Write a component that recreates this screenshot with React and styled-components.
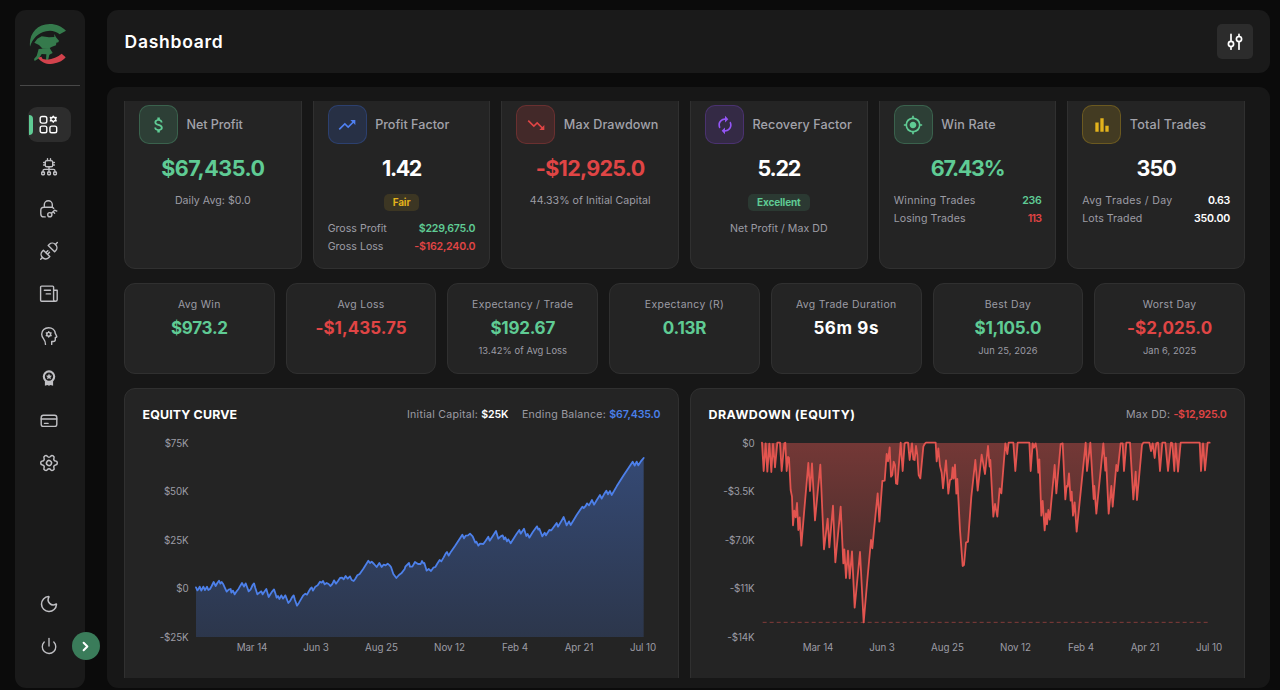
import React from "react";
import styled, { createGlobalStyle } from "styled-components";
import { Moon, Power, ChevronRight, Settings } from "lucide-react";
import {
  MdAttachMoney,
  MdTrendingUp,
  MdTrendingDown,
  MdAutorenew,
  MdMyLocation,
  MdBarChart,
} from "react-icons/md";

const GREEN = "#5fcb94";
const RED = "#e04545";
const BLUE = "#4a7fe8";
const YELLOW = "227, 179, 28";
const MINT = "95, 203, 148";

const stats = [
  {
    title: "Net Profit",
    icon: <MdAttachMoney />,
    tint: MINT,
    track: -0.1,
    value: "$67,435.0",
    valueTrack: -0.5,
    color: GREEN,
    note: "Daily Avg: $0.0",
  },
  {
    title: "Profit Factor",
    icon: <MdTrendingUp />,
    tint: "59, 110, 235",
    iconColor: "#4f80f2",
    value: "1.42",
    valueTrack: -1.4,
    badge: "Fair",
    badgeTint: YELLOW,
    rows: [
      ["Gross Profit", "$229,675.0", GREEN, -0.24],
      ["Gross Loss", "-$162,240.0", RED, -0.2],
    ],
  },
  {
    title: "Max Drawdown",
    icon: <MdTrendingDown />,
    tint: "224, 69, 69",
    track: 0.1,
    value: "-$12,925.0",
    valueTrack: -0.7,
    color: RED,
    note: "44.33% of Initial Capital",
  },
  {
    title: "Recovery Factor",
    icon: <MdAutorenew />,
    tint: "139, 76, 240",
    iconColor: "#9355f5",
    track: 0.08,
    value: "5.22",
    valueTrack: -1.25,
    badge: "Excellent",
    badgeTint: MINT,
    note: "Net Profit / Max DD",
  },
  {
    title: "Win Rate",
    icon: <MdMyLocation />,
    tint: MINT,
    track: 0.15,
    value: "67.43%",
    valueTrack: -1.3,
    color: GREEN,
    rows: [
      ["Winning Trades", "236", GREEN, -0.35, 0.27],
      ["Losing Trades", "113", RED, -0.7, 0.1],
    ],
  },
  {
    title: "Total Trades",
    icon: <MdBarChart />,
    tint: YELLOW,
    track: 0.18,
    value: "350",
    valueTrack: -1,
    rows: [
      ["Avg Trades / Day", "0.63", "#fff", -0.3, 0.3],
      ["Lots Traded", "350.00", "#fff", -0.2, 0.04],
    ],
  },
];

const metrics = [
  { label: "Avg Win", value: "$973.2", color: GREEN, track: -0.3 },
  { label: "Avg Loss", value: "-$1,435.75", color: RED, track: 0.05 },
  { label: "Expectancy / Trade", value: "$192.67", color: GREEN, track: -0.25, note: "13.42% of Avg Loss" },
  { label: "Expectancy (R)", value: "0.13R", color: GREEN, track: -0.2 },
  { label: "Avg Trade Duration", value: "56m 9s", track: 0.6 },
  { label: "Best Day", value: "$1,105.0", color: GREEN, track: -0.2, note: "Jun 25, 2026" },
  { label: "Worst Day", value: "-$2,025.0", color: RED, track: 0.1, note: "Jan 6, 2025" },
];

const dates = [
  ["Mar 14", 56.5],
  ["Jun 3", 120.5],
  ["Aug 25", 186],
  ["Nov 12", 254],
  ["Feb 4", 319.5],
  ["Apr 21", 383.5],
  ["Jul 10", 447.5],
];

// chart series, in thirds of a pixel from the plot's top left corner
const equity =
  "0,433 4,442 7,439 11,431 16,443 22,431 27,441 33,431 37,441 42,438 47,429 53,417 59,429 64,420 69,413 73,422 77,417 82,424 86,433 92,446 98,440 104,438 106,449 111,443 116,454 122,445 128,437 133,428 138,420 144,431 149,421 152,429 158,445 164,439 170,426 174,421 178,435 184,454 190,449 196,445 200,454 206,445 211,438 218,462 224,452 229,445 234,439 238,451 242,464 246,459 250,468 256,457 261,467 268,457 277,480 283,473 288,463 293,457 297,471 303,488 309,479 316,467 322,457 328,452 333,455 339,444 344,436 347,433 351,443 358,431 365,427 372,416 377,419 381,414 386,424 392,420 398,423 403,429 409,423 414,412 420,422 426,414 432,405 438,404 443,409 449,399 455,407 462,400 467,411 473,414 478,407 484,397 491,393 502,377 517,353 522,360 527,356 534,363 542,372 550,360 557,372 563,365 569,367 575,362 581,367 585,372 592,393 601,405 609,396 616,391 626,378 628,371 639,360 642,371 649,371 657,357 666,363 674,363 678,354 682,361 685,360 692,383 698,378 705,384 712,374 718,372 725,360 731,351 736,355 743,343 749,332 753,327 758,338 765,326 777,309 799,275 804,286 809,278 816,277 822,272 830,280 838,299 841,296 847,308 852,302 862,303 869,293 877,281 881,293 889,281 900,264 907,287 914,280 920,277 924,289 928,283 933,295 937,289 944,301 952,288 962,272 970,261 974,272 984,257 991,279 995,273 1000,284 1010,268 1023,250 1027,260 1030,257 1039,280 1046,269 1050,277 1060,261 1066,262 1082,240 1086,251 1094,238 1103,222 1112,247 1119,235 1124,246 1142,216 1159,191 1163,195 1169,189 1173,181 1179,187 1188,171 1194,185 1202,172 1212,156 1217,167 1224,154 1231,143 1236,154 1242,144 1247,156 1262,130 1282,98 1310,56 1316,68 1322,56 1327,67 1334,56 1343,45";

const drawdown =
  "0,-1 5,84 11,1 16,86 22,2 28,87 33,3 39,73 46,-1 54,-1 59,84 67,1 70,-1 74,84 78,42 81,45 86,141 90,161 93,247 97,203 101,223 105,180 109,261 113,223 118,308 126,211 139,60 144,144 150,61 159,232 175,65 186,319 197,227 202,313 213,188 220,358 236,191 244,361 247,319 252,405 258,323 263,406 270,325 278,494 294,327 305,538 316,411 327,291 331,316 336,261 347,151 352,236 361,114 368,113 374,33 378,55 383,13 387,101 391,96 395,56 399,66 402,121 406,123 416,-1 422,84 428,1 432,-1 438,-1 443,51 450,1 454,49 458,51 462,9 466,36 470,96 475,106 484,11 488,3 492,-1 521,-1 524,55 529,16 534,69 539,89 543,136 552,52 559,152 564,111 569,108 572,73 575,107 579,65 583,152 586,108 594,261 602,369 606,366 612,299 618,296 628,161 640,51 647,143 659,35 669,93 678,9 683,71 685,51 694,221 699,183 706,221 713,136 718,151 730,1 736,33 740,-1 754,-1 760,84 767,-1 802,-1 806,84 812,1 816,14 821,1 825,26 829,89 832,49 838,218 842,174 848,262 852,211 855,244 859,201 863,230 878,66 883,151 896,3 902,1 910,169 914,129 917,131 921,91 926,173 929,146 933,218 938,178 944,266 971,-1 975,84 985,-1 995,168 997,129 1003,212 1024,1 1030,83 1032,44 1040,212 1048,129 1052,191 1063,66 1067,84 1076,1 1082,1 1086,84 1093,-1 1104,-1 1114,169 1121,86 1125,171 1140,6 1144,-1 1162,-1 1167,24 1172,1 1178,45 1183,1 1188,-1 1194,84 1201,-1 1210,-1 1218,84 1227,-1 1231,1 1237,84 1241,1 1248,86 1256,-1 1313,-1 1317,84 1323,1 1329,82 1337,-1 1343,-1";

function Chart({ id, points, color, base, bottom, limit }) {
  return (
    <Plot viewBox="0 0 1344 582">
      <defs>
        <linearGradient id={id} gradientUnits="userSpaceOnUse" x1="0" x2="0" y1="0" y2="582">
          <stop offset="0" stopColor={color} stopOpacity={0.42} />
          <stop offset="1" stopColor={color} stopOpacity={bottom} />
        </linearGradient>
      </defs>
      <path d={`M0,${base} L${points} L1343,${base} Z`} fill={`url(#${id})`} />
      {limit && (
        <path d={`M2,${limit} H1343`} stroke={color} strokeWidth="3" strokeDasharray="12 9" opacity="0.5" />
      )}
      <polyline
        points={points}
        fill="none"
        stroke={color}
        strokeWidth="5.4"
        strokeLinejoin="round"
        strokeLinecap="round"
      />
    </Plot>
  );
}

function ChartCard({ title, track, legend, ticks, children }) {
  return (
    <Panel>
      <PanelHead>
        <PanelTitle $track={track}>{title}</PanelTitle>
        <Legend>{legend}</Legend>
      </PanelHead>
      <PlotRow>
        <YAxis>
          {ticks.map((t) => (
            <span key={t}>{t}</span>
          ))}
        </YAxis>
        {children}
      </PlotRow>
      <XAxis>
        {dates.map(([d, x]) => (
          <Tick key={d} style={{ left: x }}>
            {d}
          </Tick>
        ))}
      </XAxis>
    </Panel>
  );
}

const Logo = () => (
  <svg width="38" height="42" viewBox="88 68 114 126">
    <g fill="#357a4c">
      <path d="M91 139C87 101 112 71 150 71c20 0 37 8 49 20l-19 11c-12-10-27-13-41-9-24 5-40 22-48 46z" />
      <path d="M104 127l9-12 13-7 22 3 16-1 0-9 5 10 9 10-2 5-6 1-1 8-12 4-11 6-17 0-11-11z" />
      <path d="M117 146l33-3 9 15-10 5-4 18-6-3 1-16-14-1-8 13-13 8-2-6 8-9z" />
    </g>
    <path d="M115 172l10-3 4 7 14 2c15-2 32-8 43-18l12 11c-10 13-28 19-45 20-15 0-30-7-38-19z" fill="#d2424c" />
  </svg>
);

const DashboardIcon = () => (
  <svg width="20" height="20" viewBox="0 0 20 20">
    <rect x="1.2" y="1.5" width="6.6" height="6.6" rx="1.8" />
    <rect x="1.2" y="11.1" width="6.6" height="6.6" rx="1.8" />
    <rect x="10.9" y="11.1" width="6.8" height="6.6" rx="1.8" />
    <path d="M14.3 1.3l1.1 1.4 1.8-.2-.7 1.7.7 1.7-1.8-.2-1.1 1.5-1.1-1.5-1.8.2.7-1.7-.7-1.7 1.8.2z" />
  </svg>
);

const NetworkIcon = () => (
  <svg width="20" height="20" viewBox="0 0 20 20">
    <rect x="6.3" y="3.6" width="7.4" height="6.2" rx="1.6" />
    <path d="M8.5 3.5V1.7M11.5 3.5V1.7M6.2 5.5H4.6M6.2 8H4.6M15.4 5.5h-1.6M15.4 8h-1.6M10 10v5M4 15v-1c0-1 .6-1.6 1.6-1.6h8.8c1 0 1.6.6 1.6 1.6v1" />
    <rect x="2.7" y="15" width="2.7" height="2.7" rx=".6" />
    <rect x="8.7" y="15" width="2.7" height="2.7" rx=".6" />
    <rect x="14.7" y="15" width="2.7" height="2.7" rx=".6" />
  </svg>
);

const LockKeyIcon = () => (
  <svg width="20" height="20" viewBox="0 0 20 20">
    <path d="M5.3 8.2V5.8a4 4 0 0 1 8 0v2.4M14.7 9.4c-.4-.8-1-1.2-1.9-1.2H4.9C3 8.2 1.8 9.5 1.8 11.500v3.4c0 2 1.2 3 3.1 3h1.3" />
    <circle cx="10.8" cy="15.7" r="2.1" />
    <path d="M12.4 14.2l3.2-3 2.2.9M14.1 12.7l1.5 1.5" />
  </svg>
);

const PlugIcon = () => (
  <svg width="20" height="20" viewBox="0 0 20 20">
    <path d="M1.7 18.2l1.8-1.8M16.5 3.4l1.8-1.8" />
    <path d="M4.4 9.2l6.4 6.4-1.2 1.2c-1.7 1.7-4.5 1.5-6.1-.2-1.7-1.7-1.9-4.4-.3-6.1zM9.2 4.4l6.4 6.4 1.2-1.2c1.6-1.7 1.4-4.4-.3-6.1-1.6-1.7-4.4-1.9-6.1-.3z" />
    <path d="M7 11.6l1.9-1.9M8.6 13.2l1.9-1.9" />
  </svg>
);

const NewsIcon = () => (
  <svg width="20" height="20" viewBox="0 0 20 20">
    <path d="M16.3 17.3H2.6c-.6 0-1-.4-1-1V3.1c0-.6.4-1 1-1h11c.6 0 1 .4 1 1v12.7c0 .9.7 1.5 1.7 1.5s1.9-.6 1.9-1.5V6.2h-3.4" />
    <path d="M5.3 6.2h6.2M7.2 9.9h4.3" />
  </svg>
);

const MindIcon = () => (
  <svg width="20" height="20" viewBox="0 0 20 20">
    <path d="M6.5 18.4c0-2.6-.6-3.8-1.9-5.5C3.4 11.5 2.7 10 2.7 8.3c0-3.7 3-6.6 6.9-6.6 3.6 0 6.4 2.4 6.7 5.7l1.4 2.8c.2.5 0 .9-.5 1l-.9.2v2.1c0 1.2-.8 2-2 2h-1.6v2.9" />
    <circle cx="9.7" cy="8.3" r="1.9" />
    <path d="M9.7 5.6v.6M9.7 10.4v.6M7.3 6.9l.6.4M11.5 9.3l.6.4M7.3 9.7l.6-.4M11.5 7.3l.6-.4" />
  </svg>
);

const AwardIcon = () => (
  <svg width="20" height="20" viewBox="0 0 20 20">
    <Ring cx="10" cy="8.6" r="5.2" />
    <path
      d="M10 5.6l.9 1.900 2.1.3-1.5 1.4.4 2.1-1.9-1-1.9 1 .4-2.1L7 7.8l2.1-.3zM5.900 12.7c2.5 1.5 5.7 1.5 8.2 0v5l-2.5-.7-1.6.8-1.6-.8-2.5.7z"
      fill="currentColor"
      stroke="none"
    />
  </svg>
);

const CardIcon = () => (
  <svg width="20" height="20" viewBox="0 0 20 20">
    <rect x="2.2" y="4.3" width="15.6" height="11.1" rx="2.2" />
    <path d="M2.2 8h15.6M5.5 12.4h3.6" />
  </svg>
);

const FilterIcon = () => (
  <svg width="20" height="20" viewBox="0 0 20 20">
    <path d="M6 2.4v6.2M6 14.8v2.4M14 2.4v2M14 10.4v6.8" />
    <circle cx="6" cy="11.9" r="2.6" />
    <circle cx="14" cy="7.1" r="2.6" />
  </svg>
);

const nav = [NetworkIcon, LockKeyIcon, PlugIcon, NewsIcon, MindIcon, AwardIcon, CardIcon];

export default function App() {
  return (
    <Page>
      <GlobalStyle />
      <Sidebar>
        <Brand>
          <Logo />
        </Brand>
        <Nav>
          <NavItem $active>
            <DashboardIcon />
          </NavItem>
          {nav.map((NavIcon, i) => (
            <NavItem key={i}>
              <NavIcon />
            </NavItem>
          ))}
          <NavItem $turn>
            <Settings size={20} />
          </NavItem>
        </Nav>
        <Foot>
          <NavItem>
            <Moon size={20} />
          </NavItem>
          <NavItem>
            <Power size={18} />
          </NavItem>
        </Foot>
        <Expand>
          <ChevronRight size={15} strokeWidth={3.2} />
        </Expand>
      </Sidebar>

      <Main>
        <Header>
          <Title>Dashboard</Title>
          <HeaderButton>
            <FilterIcon />
          </HeaderButton>
        </Header>

        <Body>
          <Scroll>
            <StatGrid>
              {stats.map((s) => (
                <StatCard key={s.title}>
                  <StatHead>
                    <StatIcon $tint={s.tint} $color={s.iconColor}>
                      {s.icon}
                    </StatIcon>
                    <StatTitle $track={s.track}>{s.title}</StatTitle>
                  </StatHead>
                  <StatValue $color={s.color} $track={s.valueTrack}>
                    {s.value}
                  </StatValue>
                  {s.badge && <Badge $tint={s.badgeTint}>{s.badge}</Badge>}
                  {s.note && <StatNote>{s.note}</StatNote>}
                  {s.rows?.map(([label, value, color, track, labelTrack]) => (
                    <StatRow key={label}>
                      <RowLabel $track={labelTrack}>{label}</RowLabel>
                      <RowValue $color={color} $track={track}>
                        {value}
                      </RowValue>
                    </StatRow>
                  ))}
                </StatCard>
              ))}
            </StatGrid>

            <MetricGrid>
              {metrics.map((m) => (
                <MetricCard key={m.label}>
                  <MetricLabel>{m.label}</MetricLabel>
                  <MetricValue $color={m.color} $track={m.track}>
                    {m.value}
                  </MetricValue>
                  {m.note && <MetricNote>{m.note}</MetricNote>}
                </MetricCard>
              ))}
            </MetricGrid>

            <ChartGrid>
              <ChartCard
                title="EQUITY CURVE"
                track={0.15}
                ticks={["$75K", "$50K", "$25K", "$0", "-$25K"]}
                legend={
                  <>
                    <span>
                      Initial Capital: <Strong>$25K</Strong>
                    </span>
                    <span>
                      Ending Balance: <Strong $color={BLUE}>$67,435.0</Strong>
                    </span>
                  </>
                }
              >
                <Chart id="equity" points={equity} color="#4d80ea" base={582} bottom={0.2} />
              </ChartCard>
              <ChartCard
                title="DRAWDOWN (EQUITY)"
                track={0.5}
                ticks={["$0", "-$3.5K", "-$7.0K", "-$11K", "-$14K"]}
                legend={
                  <span>
                    Max DD: <Strong $color={RED} $track={-0.3}>-$12,925.0</Strong>
                  </span>
                }
              >
                <Chart id="drawdown" points={drawdown} color="#e2544f" base={0} bottom={0.08} limit={538} />
              </ChartCard>
            </ChartGrid>
          </Scroll>
        </Body>
      </Main>
    </Page>
  );
}

const GlobalStyle = createGlobalStyle`
  * {
    box-sizing: border-box;
  }
  body {
    margin: 0;
    background: #0b0b0b;
    font-family: Inter, "Liberation Sans", sans-serif;
    color: #fff;
    overflow: hidden;
  }
`;

const Page = styled.div`
  display: flex;
  gap: 22px;
  height: 690px;
  padding: 10px 10px 2px 15px;
`;

const Sidebar = styled.aside`
  position: relative;
  display: flex;
  flex-direction: column;
  align-items: center;
  width: 70px;
  flex-shrink: 0;
  background: #1a1a1a;
  border-radius: 11px;
`;

const Brand = styled.div`
  display: flex;
  justify-content: center;
  width: 60px;
  height: 75.5px;
  padding-top: 13px;
  padding-right: 4px;
  border-bottom: 1px solid #484848;
`;

const Nav = styled.nav`
  display: flex;
  flex-direction: column;
  gap: 7.3px;
  width: 100%;
  padding: 21.5px 14px 0 13px;
`;

const NavItem = styled.div`
  position: relative;
  display: flex;
  align-items: center;
  justify-content: center;
  height: 35px;
  padding-right: 2px;
  border-radius: 9px;
  color: ${(props) => (props.$active ? "#fff" : "#c0c0c4")};
  background: ${(props) => (props.$active ? "#2d2d2d" : "transparent")};

  svg {
    fill: none;
    stroke: currentColor;
    stroke-width: 1.4;
    stroke-linecap: round;
    stroke-linejoin: round;
    transform: ${(props) => (props.$turn ? "rotate(30deg)" : "none")};
  }

  svg.lucide {
    stroke-width: 1.8;
  }

  &::before {
    content: "";
    display: ${(props) => (props.$active ? "block" : "none")};
    position: absolute;
    left: 1px;
    top: 7.5px;
    width: 3.5px;
    height: 20px;
    border-radius: 0 4px 4px 0;
    background: ${GREEN};
  }
`;

const Ring = styled.circle`
  stroke-width: 2.1;
`;

const Foot = styled.div`
  display: flex;
  flex-direction: column;
  gap: 7px;
  margin-top: auto;
  margin-bottom: 24.5px;
`;

const Expand = styled.div`
  position: absolute;
  right: -14.5px;
  bottom: 28px;
  display: flex;
  align-items: center;
  justify-content: center;
  width: 28px;
  height: 28px;
  border-radius: 50%;
  background: #3a7c5a;
`;

const Main = styled.main`
  display: flex;
  flex-direction: column;
  flex: 1;
  gap: 14px;
  min-width: 0;
`;

const Header = styled.header`
  display: flex;
  align-items: center;
  justify-content: space-between;
  height: 63px;
  flex-shrink: 0;
  padding: 0 17.5px;
  border-radius: 11px;
  background: #1a1a1a;
`;

const Title = styled.h1`
  margin: 0;
  font-size: 17.5px;
  font-weight: 600;
  letter-spacing: 0.75px;
`;

const HeaderButton = styled.button`
  display: flex;
  align-items: center;
  justify-content: center;
  width: 35.5px;
  height: 35.5px;
  padding: 0;
  border: 0;
  border-radius: 5px;
  background: #2c2c2c;
  color: #fff;

  svg {
    fill: none;
    stroke: currentColor;
    stroke-width: 1.7;
    stroke-linecap: round;
  }
`;

const Body = styled.section`
  flex: 1;
  min-height: 0;
  padding: 14px 25px 10px 17px;
  border-radius: 11px;
  background: #171717;
`;

const Scroll = styled.div`
  display: flex;
  flex-direction: column;
  gap: 14px;
  height: 100%;
  overflow: hidden;
`;

const cardBox = `
  border: 1px solid #303030;
  border-radius: 11px;
  background: #242424;
`;

const StatGrid = styled.div`
  display: grid;
  grid-template-columns: repeat(6, 1fr);
  gap: 11px;
  flex-shrink: 0;
  height: 179px;
  margin-top: -11.5px;
`;

const StatCard = styled.div`
  ${cardBox}
  display: flex;
  flex-direction: column;
  padding: 14.5px 14px 10px;
  min-width: 0;
`;

const StatHead = styled.div`
  display: flex;
  align-items: center;
  gap: 8.5px;
`;

const StatIcon = styled.div`
  display: flex;
  align-items: center;
  justify-content: center;
  width: 39px;
  height: 39px;
  flex-shrink: 0;
  border: 1px solid rgba(${(props) => props.$tint}, 0.25);
  border-radius: 10px;
  background: rgba(${(props) => props.$tint}, 0.17);
  color: ${(props) => props.$color || `rgb(${props.$tint})`};
  font-size: 20px;
`;

const StatTitle = styled.div`
  color: #a2a2aa;
  font-size: 12.6px;
  font-weight: 500;
  letter-spacing: ${(props) => props.$track || 0}px;
  white-space: nowrap;
`;

const StatValue = styled.div`
  margin-top: 10px;
  margin-bottom: 10px;
  font-size: 21.5px;
  font-weight: 700;
  line-height: 28px;
  text-align: center;
  letter-spacing: ${(props) => props.$track || 0}px;
  color: ${(props) => props.$color || "#fff"};
`;

const Badge = styled.div`
  align-self: center;
  margin-top: 1.5px;
  margin-bottom: 8.7px;
  padding: 0 9px;
  border-radius: 5px;
  background: rgba(${(props) => props.$tint}, 0.13);
  color: rgb(${(props) => props.$tint});
  font-size: 10px;
  font-weight: 700;
  line-height: 17.7px;
  letter-spacing: -0.15px;
`;

const StatNote = styled.div`
  color: #9c9ca4;
  font-size: 10.6px;
  line-height: 17.7px;
  letter-spacing: 0.04px;
  text-align: center;
  white-space: nowrap;
`;

const StatRow = styled.div`
  display: flex;
  justify-content: space-between;
  font-size: 10.6px;
  line-height: 17.7px;
  white-space: nowrap;
`;

const RowLabel = styled.span`
  color: #9c9ca4;
  letter-spacing: ${(props) => props.$track || 0}px;
`;

const RowValue = styled.span`
  color: ${(props) => props.$color};
  font-weight: 600;
  letter-spacing: ${(props) => props.$track || 0}px;
`;

const MetricGrid = styled.div`
  display: grid;
  grid-template-columns: repeat(7, 1fr);
  gap: 11px;
  flex-shrink: 0;
  height: 91px;
`;

const MetricCard = styled.div`
  ${cardBox}
  padding-top: 13px;
  text-align: center;
  white-space: nowrap;
`;

const MetricLabel = styled.div`
  color: #9c9ca4;
  font-size: 10.4px;
  line-height: 16px;
  letter-spacing: 0.35px;
`;

const MetricValue = styled.div`
  margin-top: 2px;
  font-size: 17px;
  font-weight: 700;
  line-height: 26px;
  letter-spacing: ${(props) => props.$track || 0}px;
  color: ${(props) => props.$color || "#fff"};
`;

const MetricNote = styled.div`
  margin-top: 2px;
  color: #9c9ca4;
  font-size: 9.4px;
  line-height: 15px;
  letter-spacing: 0.06px;
`;

const ChartGrid = styled.div`
  display: grid;
  grid-template-columns: repeat(2, 1fr);
  gap: 11px;
  flex-shrink: 0;
  height: 310px;
`;

const Panel = styled.div`
  ${cardBox}
  padding: 17px 17.5px;
`;

const PanelHead = styled.div`
  display: flex;
  align-items: center;
  justify-content: space-between;
  height: 18px;
`;

const PanelTitle = styled.h2`
  margin: 0;
  font-size: 12.4px;
  font-weight: 700;
  letter-spacing: ${(props) => props.$track}px;
`;

const Legend = styled.div`
  display: flex;
  gap: 13.5px;
  color: #9c9ca4;
  font-size: 10.6px;
  letter-spacing: 0.25px;
`;

const Strong = styled.span`
  color: ${(props) => props.$color || "#fff"};
  font-weight: 600;
  letter-spacing: ${(props) => props.$track ?? -0.1}px;
`;

const PlotRow = styled.div`
  display: flex;
  height: 194px;
  margin-top: 19.5px;
`;

const YAxis = styled.div`
  display: flex;
  flex-direction: column;
  justify-content: space-between;
  width: 46px;
  margin: -5.5px 7px -6.5px 0;
  color: #9c9ca4;
  font-size: 9.8px;
  line-height: 12px;
  letter-spacing: -0.1px;
  text-align: right;
`;

const Plot = styled.svg`
  width: 448px;
  height: 194px;
  overflow: visible;
`;

const XAxis = styled.div`
  position: relative;
  height: 12px;
  margin: 5px 0 0 53px;
`;

const Tick = styled.span`
  position: absolute;
  transform: translateX(-50%);
  color: #9c9ca4;
  font-size: 9.8px;
  line-height: 12px;
  letter-spacing: -0.08px;
  white-space: nowrap;
`;
